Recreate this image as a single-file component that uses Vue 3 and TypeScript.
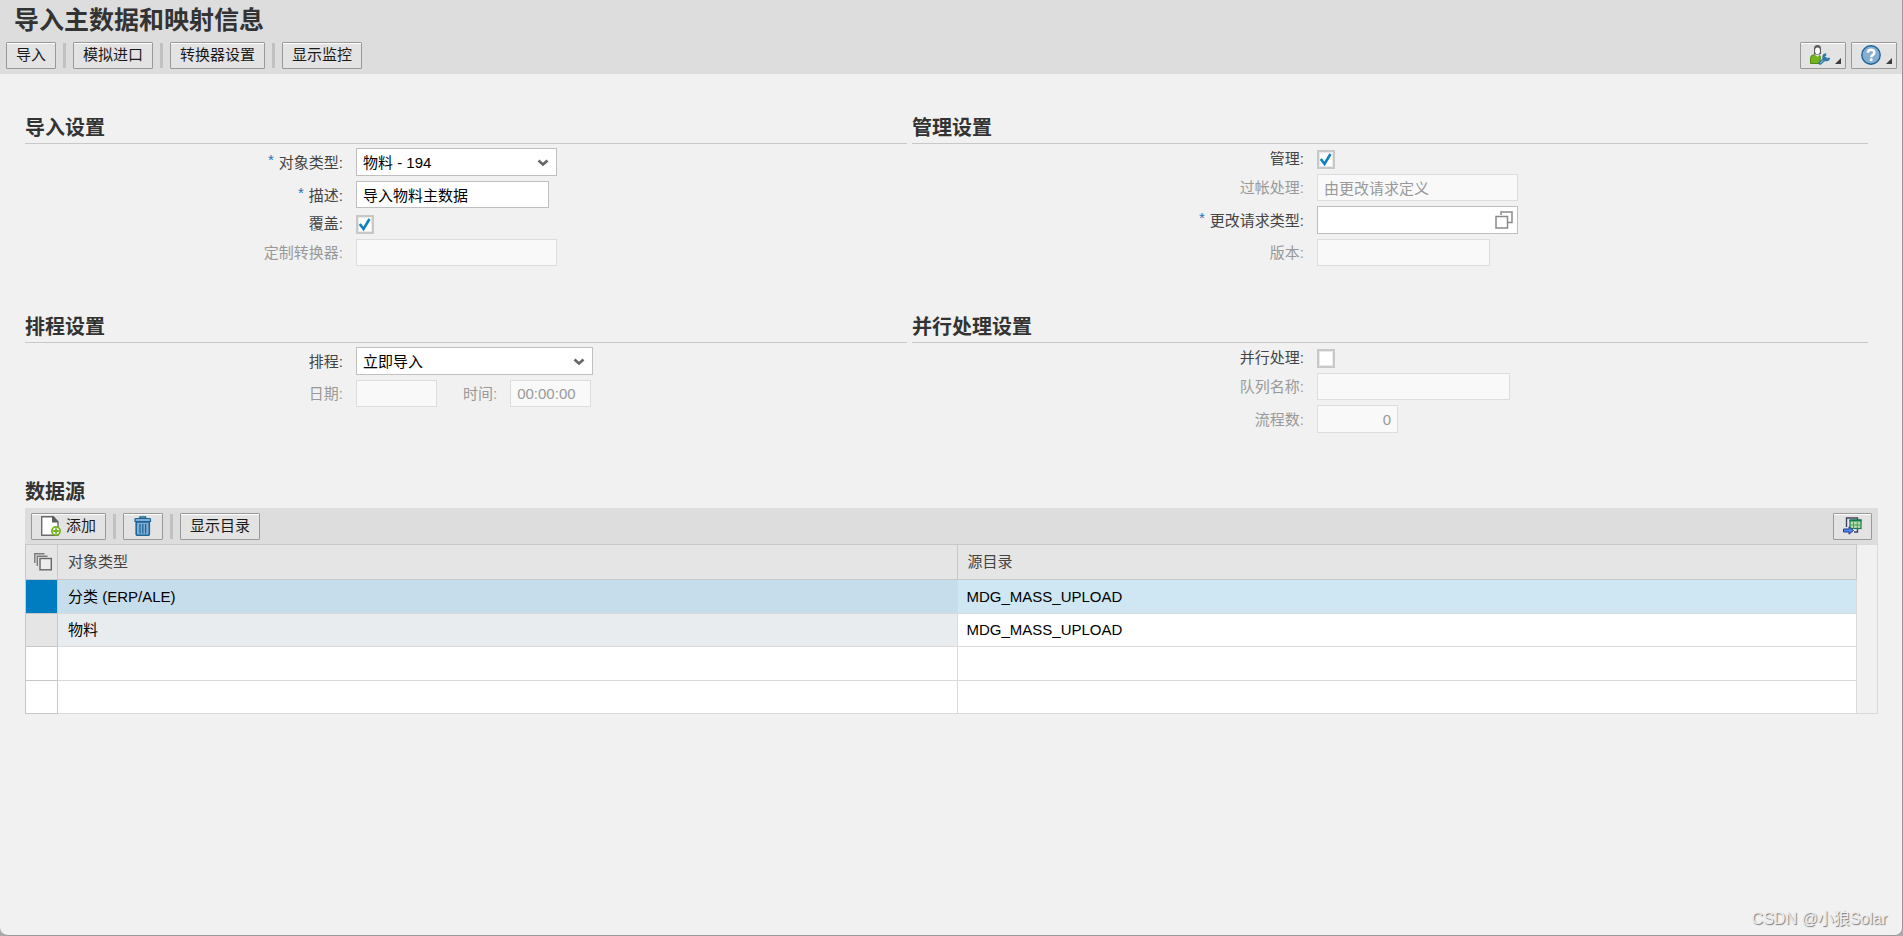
<script setup lang="ts">
import { ref } from 'vue'

interface SourceRow {
  type: string
  dir: string
  state: 'selected' | 'filled' | 'empty'
}

const objectType = ref('物料 - 194')
const description = ref('导入物料主数据')
const overwrite = ref(true)
const schedule = ref('立即导入')
const governed = ref(true)
const requestType = ref('')
const parallel = ref(false)

const actions: string[] = ['导入', '模拟进口', '转换器设置', '显示监控']

const rows = ref<SourceRow[]>([
  { type: '分类 (ERP/ALE)', dir: 'MDG_MASS_UPLOAD', state: 'selected' },
  { type: '物料', dir: 'MDG_MASS_UPLOAD', state: 'filled' },
  { type: '', dir: '', state: 'empty' },
  { type: '', dir: '', state: 'empty' },
])
</script>

<template>
  <div class="window">
    <header class="top">
      <h1>导入主数据和映射信息</h1>
      <div class="bar">
        <template v-for="(name, i) in actions" :key="name">
          <span v-if="i > 0" class="sep"></span>
          <button type="button" class="btn">{{ name }}</button>
        </template>
        <span class="grow"></span>
        <div class="tools">
          <button type="button" class="btn menu-btn" aria-label="个性化">
            <svg width="20" height="20" viewBox="0 0 20 20">
              <path d="M0.500 18.500V13.500q0-3.500 3.500-3.800h4q2.500 .3 2.500 2.800L9.500 18.500Z" fill="#74b41c" stroke="#4e8a14" stroke-width="1" />
              <path d="M4.500 9.500l3 2.300L10.500 9.500V8H4.500Z" fill="#e6e6e6" />
              <path d="M4 9V3.500Q4 0 7.500 0T11 3.500V9Q7.500 10.500 4 9Z" fill="#5a5a5a" />
              <ellipse cx="7.500" cy="5.800" rx="2.500" ry="3.400" fill="#fff" />
              <path d="M10.200 18l5-4.500" stroke="#2f78a5" stroke-width="3.400" stroke-linecap="round" />
              <path d="M10.600 17.700l4-3.600" stroke="#85add3" stroke-width="1.200" stroke-linecap="round" />
              <path d="M19 12.800a2.800 2.800 0 1 1-2.800-3.300" fill="none" stroke="#2f78a5" stroke-width="2.400" />
            </svg>
            <svg class="corner" width="6" height="6" viewBox="0 0 6 6"><path d="M6 0V6H0Z" fill="#3c3c3c" /></svg>
          </button>
          <button type="button" class="btn menu-btn" aria-label="帮助">
            <svg width="20" height="20" viewBox="0 0 20 20">
              <circle cx="10" cy="10" r="9.200" fill="#85add3" stroke="#1b6796" stroke-width="1.400" />
              <path d="M6.900 7.800q0-3 3.200-3t3.200 2.700q0 1.600-1.800 2.600-1.300.8-1.300 2.200" fill="none" stroke="#fff" stroke-width="2.500" />
              <rect x="8.900" y="13.500" width="2.600" height="2.600" fill="#fff" />
            </svg>
            <svg class="corner" width="6" height="6" viewBox="0 0 6 6"><path d="M6 0V6H0Z" fill="#3c3c3c" /></svg>
          </button>
        </div>
      </div>
    </header>

    <main>
      <div class="panels">
        <section>
          <h2>导入设置</h2>
          <div class="form">
            <label for="object-type"><i>*</i>对象类型:</label>
            <div class="pick w-m">
              <select id="object-type" v-model="objectType"><option>物料 - 194</option></select>
              <svg width="12" height="8" viewBox="0 0 12 8"><path d="M1.500 1.500L6 5.500L10.500 1.500" fill="none" stroke="#666" stroke-width="2.600" /></svg>
            </div>
            <label for="description"><i>*</i>描述:</label>
            <input id="description" v-model="description" class="w-s" type="text" />
            <label for="overwrite">覆盖:</label>
            <div class="check">
              <input id="overwrite" v-model="overwrite" type="checkbox" />
              <svg v-if="overwrite" width="18" height="19" viewBox="0 0 18 19"><path d="M3.800 9L7.500 14L13.500 4" fill="none" stroke="#0f81c0" stroke-width="2.600" /></svg>
            </div>
            <label for="converter" class="off">定制转换器:</label>
            <input id="converter" class="w-m" type="text" disabled />
          </div>
        </section>

        <section>
          <h2>管理设置</h2>
          <div class="form wide">
            <label for="governed">管理:</label>
            <div class="check">
              <input id="governed" v-model="governed" type="checkbox" />
              <svg v-if="governed" width="18" height="19" viewBox="0 0 18 19"><path d="M3.800 9L7.500 14L13.500 4" fill="none" stroke="#0f81c0" stroke-width="2.600" /></svg>
            </div>
            <label for="posting" class="off">过帐处理:</label>
            <input id="posting" class="w-m" type="text" value="由更改请求定义" disabled />
            <label for="request-type"><i>*</i>更改请求类型:</label>
            <div class="pick w-m">
              <input id="request-type" v-model="requestType" type="text" />
              <button type="button" class="help" aria-label="值帮助">
                <svg width="18" height="18" viewBox="0 0 18 18">
                  <path d="M6 4V1H17V11.500H13" fill="none" stroke="#8a8a8a" stroke-width="1.500" />
                  <rect x="1" y="5.500" width="11.500" height="11.500" fill="#fff" stroke="#8a8a8a" stroke-width="1.500" />
                </svg>
              </button>
            </div>
            <label for="version" class="off">版本:</label>
            <input id="version" class="w-v" type="text" disabled />
          </div>
        </section>

        <section>
          <h2>排程设置</h2>
          <div class="form">
            <label for="schedule">排程:</label>
            <div class="pick w-l">
              <select id="schedule" v-model="schedule"><option>立即导入</option></select>
              <svg width="12" height="8" viewBox="0 0 12 8"><path d="M1.500 1.500L6 5.500L10.500 1.500" fill="none" stroke="#666" stroke-width="2.600" /></svg>
            </div>
            <label for="date" class="off">日期:</label>
            <div class="pair">
              <input id="date" class="w-xs" type="text" disabled />
              <label for="time" class="off">时间:</label>
              <input id="time" class="w-xs" type="text" value="00:00:00" disabled />
            </div>
          </div>
        </section>

        <section>
          <h2>并行处理设置</h2>
          <div class="form wide">
            <label for="parallel">并行处理:</label>
            <div class="check">
              <input id="parallel" v-model="parallel" type="checkbox" />
              <svg v-if="parallel" width="18" height="19" viewBox="0 0 18 19"><path d="M3.800 9L7.500 14L13.500 4" fill="none" stroke="#0f81c0" stroke-width="2.600" /></svg>
            </div>
            <label for="queue" class="off">队列名称:</label>
            <input id="queue" class="w-s" type="text" disabled />
            <label for="processes" class="off">流程数:</label>
            <input id="processes" class="w-xs num" type="text" value="0" disabled />
          </div>
        </section>
      </div>

      <section class="sources">
        <h2>数据源</h2>
        <div class="bar">
          <button type="button" class="btn">
            <svg width="20" height="20" viewBox="0 0 20 20">
              <path d="M0.700 0.700H12L17 6V19.300H0.700Z" fill="#fff" stroke="#6a6a6a" stroke-width="1.400" />
              <path d="M11 0H12.500L18 6.500H11Z" fill="#5e5e5e" />
              <circle cx="15" cy="15" r="4.100" fill="#fff" stroke="#74b41c" stroke-width="1.800" />
              <path d="M15 12.200V17.800M12.200 15H17.800" stroke="#74b41c" stroke-width="1.800" />
            </svg>
            添加
          </button>
          <span class="sep"></span>
          <button type="button" class="btn" aria-label="删除">
            <svg width="20" height="20" viewBox="-1 0 20 20">
              <path d="M6 2.500V1H11.500V2.500" fill="none" stroke="#1b6796" stroke-width="1.600" />
              <path d="M1 5.500V3.200Q1 2.500 2 2.500H15.500Q16.500 2.500 16.500 3.200V5.500Z" fill="#85add3" stroke="#1b6796" stroke-width="1.200" />
              <path d="M2.200 6H15.300V18Q15.300 19.300 14 19.300H3.500Q2.200 19.300 2.200 18Z" fill="#85add3" stroke="#1b6796" stroke-width="1.600" />
              <path d="M6 8V17.500M8.800 8V17.500M11.600 8V17.500" stroke="#1b6796" stroke-width="1.300" />
            </svg>
          </button>
          <span class="sep"></span>
          <button type="button" class="btn">显示目录</button>
          <span class="grow"></span>
          <button type="button" class="btn" aria-label="导出">
            <svg width="19" height="18" viewBox="0 0 19 18">
              <path d="M3.500 10V1H14.500V15H11" fill="#e8e8f2" stroke="#434160" stroke-width="1.400" />
              <rect x="7" y="3" width="11" height="8.500" fill="#b9dfa8" stroke="#187a52" stroke-width="1.200" />
              <rect x="6.500" y="2.500" width="12" height="2" fill="#187a52" />
              <path d="M7 8H18M10.500 5V11.500M14.300 5V11.500" stroke="#4a9c6d" stroke-width="1" />
              <path d="M0.500 12H6V9.700L10.500 13.500L6 17.200V15H0.500Z" fill="#4b86f0" stroke="#2c3c86" stroke-width="1" />
            </svg>
          </button>
        </div>
        <div class="grid">
          <table>
            <colgroup><col class="mark" /><col /><col /></colgroup>
            <thead>
              <tr>
                <th scope="col" aria-label="选择">
                  <svg width="18" height="18" viewBox="0 0 18 18">
                    <path d="M0.800 10V0.800H10.500" fill="none" stroke="#7a7a7a" stroke-width="1.400" />
                    <path d="M3.300 13V3.200H13.500" fill="none" stroke="#7a7a7a" stroke-width="1.400" />
                    <rect x="6" y="5.500" width="11.300" height="11.300" fill="#ececec" stroke="#666" stroke-width="1.400" />
                  </svg>
                </th>
                <th scope="col">对象类型</th>
                <th scope="col">源目录</th>
              </tr>
            </thead>
            <tbody>
              <tr v-for="(row, i) in rows" :key="i" :class="row.state">
                <td></td>
                <td>{{ row.type }}</td>
                <td>{{ row.dir }}</td>
              </tr>
            </tbody>
          </table>
          <div class="gutter"></div>
        </div>
      </section>
    </main>

    <div class="mark-text">CSDN @小狼Solar</div>
  </div>
</template>

<style>
body {
  margin: 0;
  background: #aaa;
}
</style>

<style scoped>
.window {
  box-sizing: border-box;
  position: relative;
  min-height: 100vh;
  background: #f1f1f1;
  border-right: 1px solid #999;
  border-bottom: 1px solid #999;
  border-radius: 0 0 8px 8px;
  font: 15px/20px "Liberation Sans", "Noto Sans CJK SC", sans-serif;
  color: #333;
}
input, select, button {
  box-sizing: border-box;
  margin: 0;
  font: inherit;
}
svg {
  display: block;
  flex: none;
}
h1, h2 {
  margin: 0;
  color: #333;
  font-weight: 700;
}
h1 {
  height: 42px;
  padding-left: 14px;
  font-size: 25px;
  line-height: 40px;
  box-sizing: border-box;
}
h2 {
  padding-bottom: 2px;
  font-size: 20px;
  line-height: 26px;
}
.top {
  background: #ddd;
}
.bar {
  display: flex;
  align-items: center;
  gap: 7px;
}
.top .bar {
  padding: 0 5px 5px 6px;
}
.btn {
  display: flex;
  align-items: center;
  gap: 5px;
  height: 27px;
  padding: 0 9px 1px;
  border: 1px solid #999;
  border-radius: 1px;
  background: #e3e3e3;
  box-shadow: inset 0 1px #fff;
  color: #1a1a1a;
  white-space: nowrap;
}
.sep {
  width: 3px;
  height: 25px;
  background: #c1c1c1;
}
.grow {
  flex: 1;
}
.tools {
  display: flex;
  gap: 5px;
}
.menu-btn {
  padding-right: 4px;
}
.corner {
  align-self: flex-end;
  margin-bottom: 3px;
}
main {
  padding: 41px 24px 60px 25px;
}
.panels {
  display: grid;
  grid-template-columns: minmax(0, 882fr) minmax(0, 956fr);
  gap: 48px 5px;
  margin-right: 10px;
}
.panels h2 {
  border-bottom: 1px solid #c8c8c8;
}
.form {
  display: grid;
  grid-template-columns: 318px 1fr;
  align-items: center;
  gap: 5px 13px;
  padding-top: 4px;
}
.form.wide {
  grid-template-columns: 392px 1fr;
}
label {
  justify-self: end;
  padding-top: 1px;
  color: #444;
  white-space: nowrap;
}
label i {
  margin-right: 5px;
  color: #1f74b8;
  font-style: normal;
  line-height: 1;
  vertical-align: 3px;
}
label.off {
  color: #999;
}
input[type="text"], select {
  height: 27px;
  padding: 0 6px;
  border: 1px solid #bfbfbf;
  border-radius: 0;
  background: #fff;
  color: #000;
}
input[type="text"]:disabled {
  border-color: #ddd;
  background: #f9f9f9;
  color: #999;
}
input[type="text"].num {
  height: 28px;
  text-align: right;
}
.pick {
  position: relative;
}
.pick input[type="text"], .pick select {
  display: block;
  width: 100%;
  height: 28px;
  padding-top: 2px;
  appearance: none;
}
.pick > svg {
  position: absolute;
  right: 8px;
  top: 11px;
  pointer-events: none;
}
.help {
  position: absolute;
  right: 5px;
  top: 5px;
  padding: 0;
  border: 0;
  background: none;
}
.w-xs { width: 81px; }
.w-v { width: 173px; }
.w-s { width: 193px; }
.w-m { width: 201px; }
.w-l { width: 237px; }
.check {
  position: relative;
  height: 19px;
  padding-top: 2px;
}
.check input {
  display: block;
  appearance: none;
  width: 18px;
  height: 19px;
  border: 2px solid #c8c8c8;
  background: #fff;
  box-shadow: inset 0 0 0 1px #e9e9e9;
}
.check svg {
  position: absolute;
  left: 0;
  top: 2px;
  pointer-events: none;
}
.pair {
  display: flex;
  align-items: center;
}
.pair label {
  margin: 0 13px 0 26px;
}
.sources {
  margin-top: 46px;
}
.sources h2 {
  padding-bottom: 3px;
}
.sources .bar {
  padding: 5px 6px 4px;
  background: #ddd;
}
.grid {
  display: flex;
}
table {
  flex: 1;
  table-layout: fixed;
  width: 100%;
  border-collapse: separate;
  border-spacing: 0;
  border: solid #c8c8c8;
  border-width: 1px 0 0 1px;
}
.mark {
  width: 32px;
}
th, td {
  box-sizing: border-box;
  padding: 0 10px;
  border: solid #dadada;
  border-width: 0 1px 1px 0;
  text-align: left;
  font-weight: 400;
}
th {
  height: 35px;
  border-color: #c8c8c8;
  background: #e5e5e5;
  color: #444;
}
td {
  height: 33px;
  background: #fff;
  color: #000;
}
td:last-child {
  padding-left: 9px;
}
tr:nth-child(odd) td {
  height: 34px;
}
th:first-child, td:first-child {
  padding: 0;
  border-color: #c8c8c8;
}
th svg {
  margin-left: 8px;
}
.selected td { background: #cfe7f3; }
.selected td:nth-child(2) { background: #c6ddeb; }
.selected td:first-child { background: #007cc0; }
.filled td:nth-child(2) { background: #e8ecef; }
.filled td:first-child { background: #e5e5e5; }
.gutter {
  box-sizing: border-box;
  width: 21px;
  border: solid #dadada;
  border-width: 1px 1px 1px 0;
}
.mark-text {
  position: absolute;
  right: 15px;
  bottom: 6px;
  color: #eee;
  font-size: 16px;
  text-shadow: 1px 1px 1px #777;
}
</style>
